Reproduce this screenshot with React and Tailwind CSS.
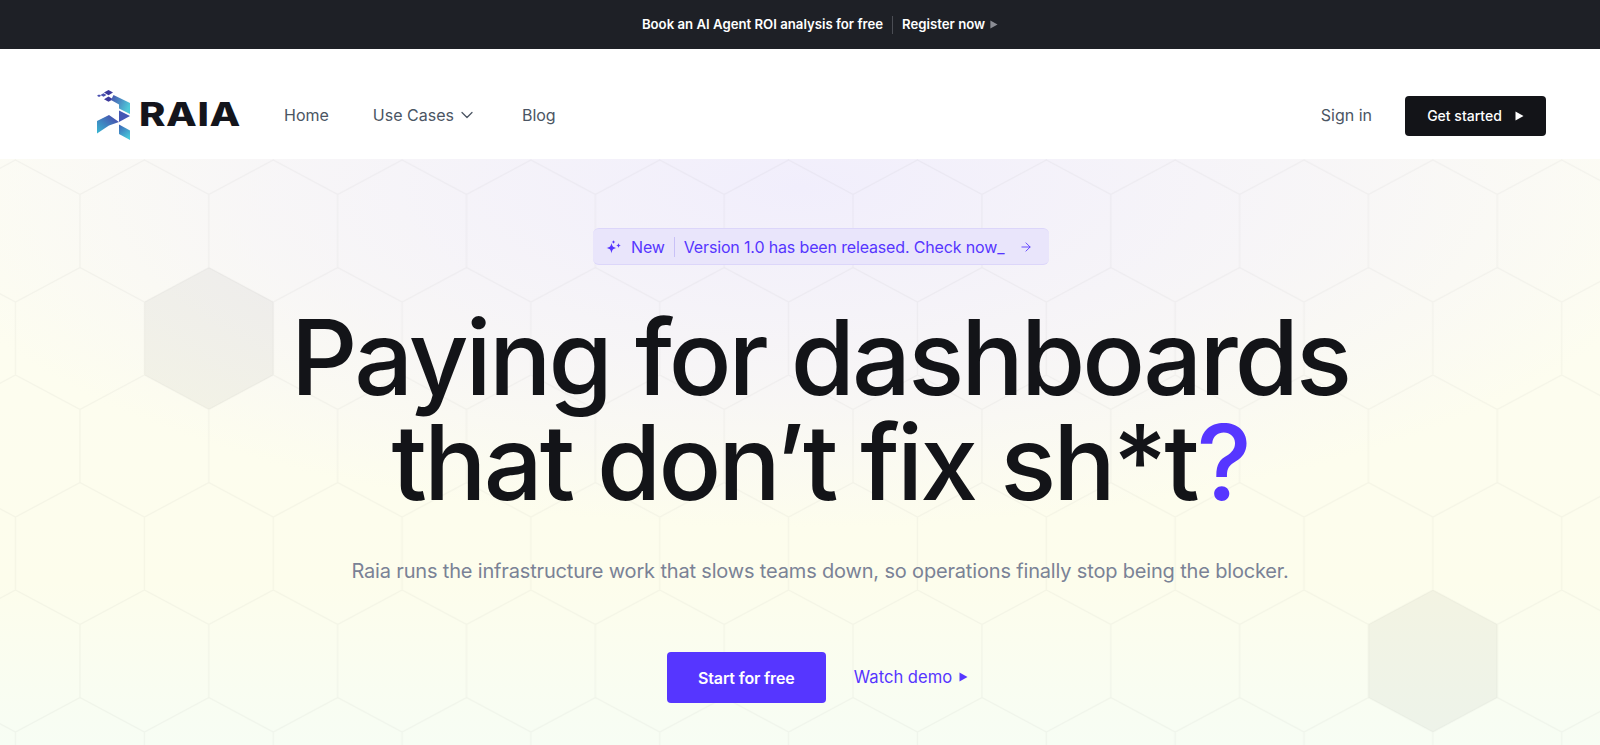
import { ArrowRight, ChevronDown } from "lucide-react";

const Triangle = ({ className }) => (
  <svg viewBox="0 0 10 10" className={className} fill="currentColor">
    <path d="M1.5 0.5 9.5 5 1.5 9.5Z" />
  </svg>
);

const Stars = () => (
  <svg viewBox="0 0 16 14" className="h-[14px] w-[16px]" fill="currentColor">
    <path d="M5.5 3C6.1 6.2 7 7.3 10.5 8 7 8.7 6.1 9.8 5.5 13.5 4.9 9.8 4 8.7 0.5 8 4 7.3 4.9 6.2 5.5 3Z" />
    <path d="M12.5 3C12.8 4.6 13.3 5.1 15 5.5 13.3 5.9 12.8 6.4 12.5 8 12.2 6.4 11.7 5.9 10 5.5 11.7 5.1 12.2 4.6 12.5 3Z" />
    <path d="M7.5 0C7.7 1.2 8.2 1.7 9.4 2 8.2 2.3 7.7 2.8 7.5 4 7.3 2.8 6.8 2.3 5.6 2 6.8 1.7 7.3 1.2 7.5 0Z" />
  </svg>
);

const Logo = () => (
  <svg viewBox="0 0 33 50" className="h-[50px] w-[33px]">
    <defs>
      <linearGradient id="logoA" x1="0" y1="0" x2="1" y2="0.5">
        <stop offset="0" stopColor="#4650ad" />
        <stop offset="1" stopColor="#50c8d8" />
      </linearGradient>
      <linearGradient id="logoB" x1="0" y1="1" x2="1" y2="0">
        <stop offset="0" stopColor="#38b8d2" />
        <stop offset="1" stopColor="#4a3fa8" />
      </linearGradient>
      <linearGradient id="logoC" x1="0" y1="0" x2="0.6" y2="1">
        <stop offset="0" stopColor="#3b62b6" />
        <stop offset="1" stopColor="#48c8da" />
      </linearGradient>
    </defs>
    <path d="M11.5 0 16 2.6 11.5 5.2 7 2.6Z" fill="#3d3a9c" />
    <path d="M6.5 3.2 9.5 5 6.5 6.8 3.5 5Z" fill="#4a50b0" />
    <path d="M2 4.5 4.2 5.8 2 7.1 0 5.8Z" fill="#4a50b0" />
    <path d="M11.5 6.6 16 9.2 11.5 11.8 7 9.2Z" fill="#3d3a9c" />
    <path d="M16.5 5 33 13V24L22 18.5V14.5L14 10Z" fill="url(#logoA)" />
    <path d="M22 20.5 33 26 22 32Z" fill="#4458b4" />
    <path d="M0 31 12 25 22 32 12 35.5 0 43.5Z" fill="url(#logoB)" />
    <path d="M22 34.5 33 40.5V50L22 44Z" fill="url(#logoC)" />
  </svg>
);

export default function App() {
  return (
    <div className="h-[745px] overflow-hidden bg-white font-['Inter',sans-serif]">
      {/* Top announcement */}
      <div className="flex h-[49px] items-center justify-center bg-[#1e2026] pl-[40px] text-[13.2px] font-semibold text-white">
        <span>Book an AI Agent ROI analysis for free</span>
        <span className="mx-[9px] h-[18px] w-px bg-[#4b4d54]"></span>
        <span>Register now</span>
        <Triangle className="ml-[4px] h-[9px] w-[9px] text-[#8b8d94]" />
      </div>

      {/* Nav */}
      <nav className="flex h-[110px] items-center justify-between pl-[97px] pr-[54px] pt-[22px]">
        <div className="flex items-center">
          <div className="flex w-[187px] items-center">
            <Logo />
            <span className="ml-[9px] origin-left scale-x-[1.25] text-[32px] font-extrabold leading-none tracking-[0.5px] text-[#14151c]">
              RAIA
            </span>
          </div>
          <div className="flex items-center text-base text-[#4b5563]">
            <a>Home</a>
            <a className="ml-[44px] flex items-center">
              Use Cases
              <ChevronDown className="ml-[3px] h-[20px] w-[20px]" strokeWidth={1.5} />
            </a>
            <a className="ml-[45px]">Blog</a>
          </div>
        </div>
        <div className="flex items-center">
          <a className="text-base text-[#4b5563]">Sign in</a>
          <button className="ml-[33px] mt-[2px] flex h-[40px] w-[141px] items-center justify-center rounded bg-[#131418] text-sm font-medium text-white">
            Get started
            <Triangle className="ml-[12px] h-[10px] w-[10px]" />
          </button>
        </div>
      </nav>

      {/* Hero */}
      <section className="relative h-[586px] bg-[radial-gradient(ellipse_900px_340px_at_50%_5%,#f1eefc_0%,#f3f0fb88_60%,transparent_100%),linear-gradient(180deg,#fdfdf3_0%,#fdfdec_72%,#f7fdf4_100%)]">
        <svg className="absolute inset-0 h-full w-full">
          <defs>
            <pattern id="hex" x="80" y="1" width="128.85" height="215" patternUnits="userSpaceOnUse">
              <path
                d="M0 34.5 64.4 0 128.85 34.5M0 34.5V107.5L64.4 142 128.85 107.5V34.5M64.4 142V215"
                fill="none"
                stroke="#000"
                strokeOpacity="0.03"
                strokeWidth="1.25"
              />
            </pattern>
          </defs>
          <rect width="100%" height="100%" fill="url(#hex)" />
          <path d="M209 108.5 273.4 143V216L209 250.5 144.6 216V143Z" fill="#000" fillOpacity="0.04" />
          <path d="M1432.9 431 1497.35 465.5V538.5L1432.9 573 1368.5 538.5V465.5Z" fill="#000" fillOpacity="0.04" />
        </svg>

        <div className="relative flex flex-col items-center pl-[40px] pt-[69px]">
          <a className="ml-[2px] flex h-[37px] w-[456px] items-center rounded-md border-y border-[#dcd6fa] bg-[#e9e5fb] pl-[13px] text-base tracking-[-0.15px] text-[#5636ff]">
            <Stars />
            <span className="ml-[9px]">New</span>
            <span className="mx-[9px] h-[20px] w-px bg-[#c9c1f7]"></span>
            <span>Version 1.0 has been released. Check now_</span>
            <ArrowRight className="ml-[15px] h-[14px] w-[14px]" strokeWidth={1.5} />
          </a>

          <h1 className="mt-[40px] text-center text-[104px] font-[450] leading-[105px] tracking-[-0.028em] text-[#131418]">
            Paying for dashboards
            <br />
            that don’t fix sh*t<span className="text-[#5636ff]">?</span>
          </h1>

          <p className="mt-[40px] text-[20px] leading-[32px] tracking-[-0.17px] text-[#7a8296]">
            Raia runs the infrastructure work that slows teams down, so operations finally stop being the blocker.
          </p>

          <div className="mt-[65px] flex items-center pr-[5px]">
            <button className="h-[51px] w-[159px] rounded bg-[#5636ff] text-base font-semibold tracking-[-0.01em] text-white">
              Start for free
            </button>
            <a className="ml-[28px] flex items-center text-[16.6px] text-[#5636ff]">
              Watch demo
              <Triangle className="ml-[6px] h-[10px] w-[10px]" />
            </a>
          </div>
        </div>
      </section>
    </div>
  );
}
